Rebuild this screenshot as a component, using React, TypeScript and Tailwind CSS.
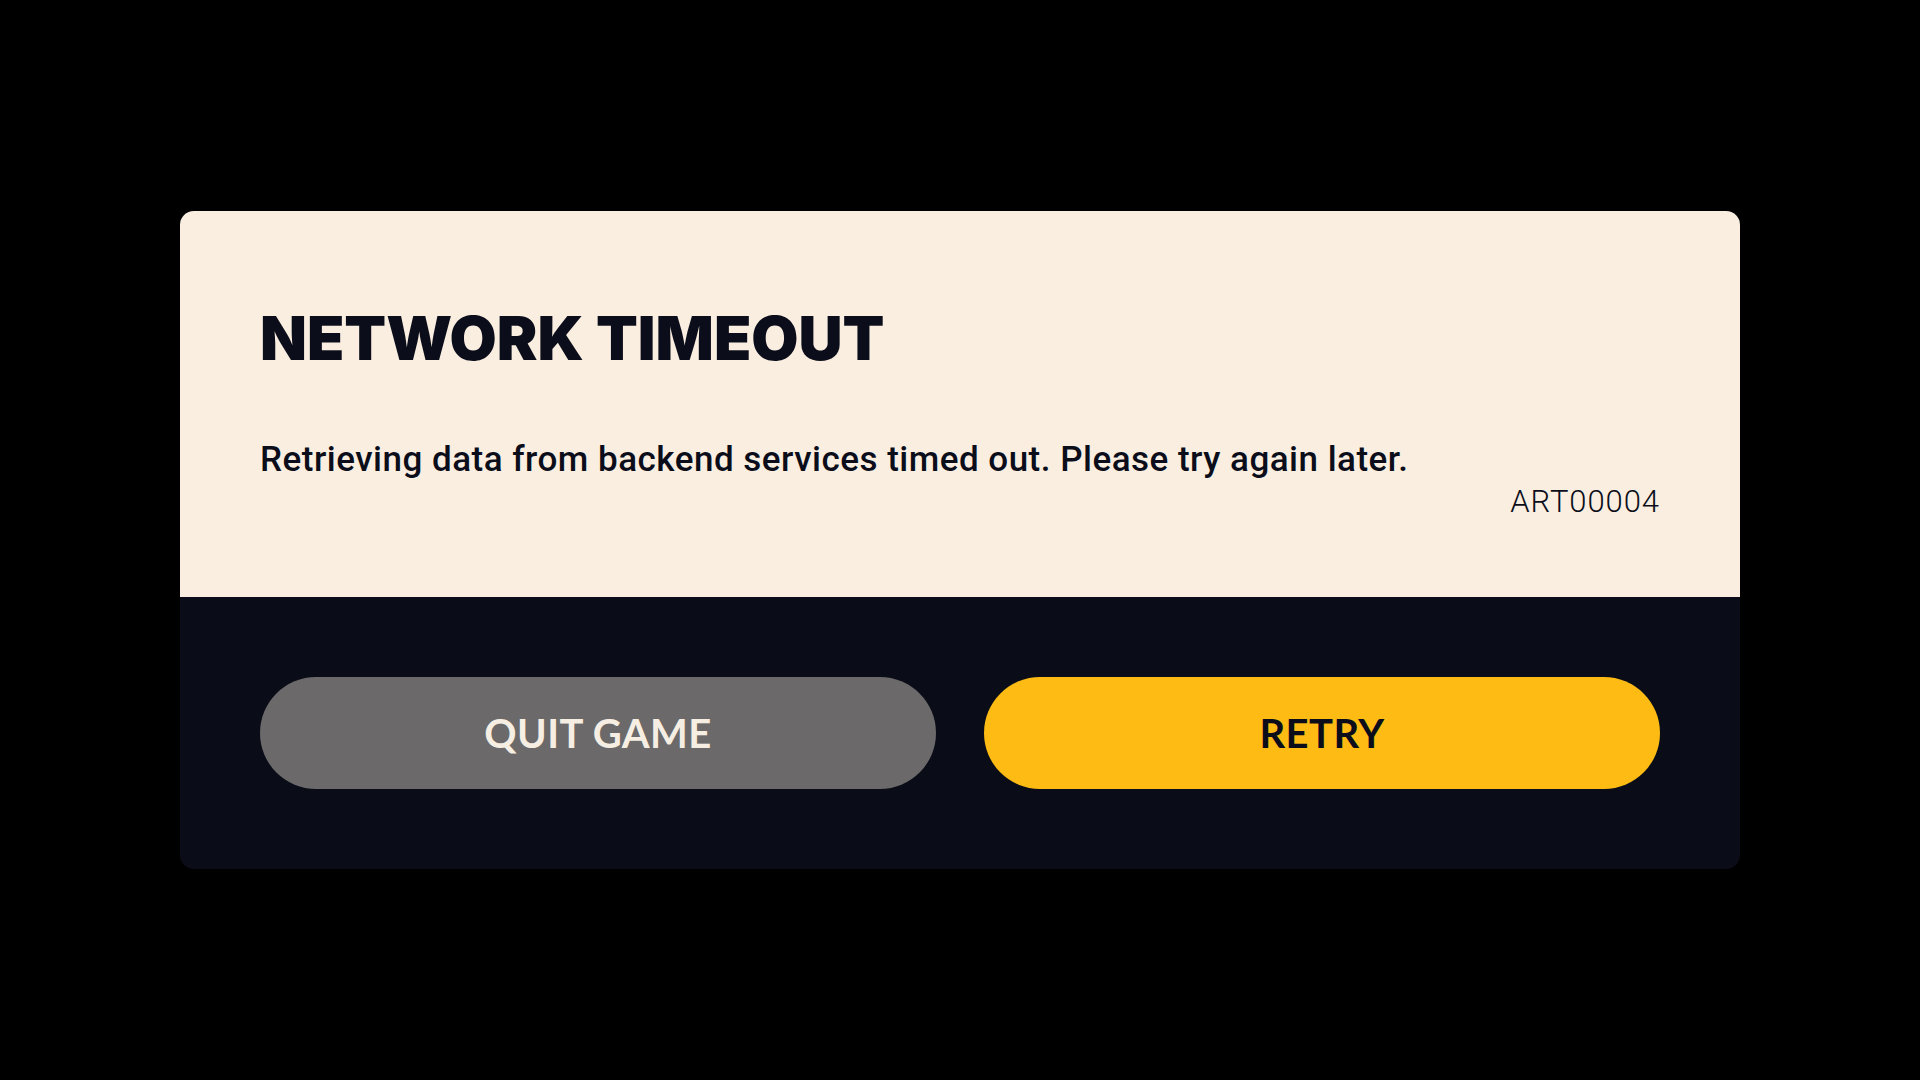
import React from 'react';

// Network timeout error dialog
export default function App() {
  return (
    <div className="w-[1920px] h-[1080px] bg-black flex items-center justify-center">
      <div className="w-[1560px] h-[658px] rounded-[14px] overflow-hidden flex flex-col">
        {/* Message area */}
        <div className="h-[388px] bg-[#FAEEE1] px-20 pt-[97px] text-[#0B0E1A]">
          <h1 className="font-['Inter',sans-serif] font-black text-[61px] leading-none tracking-normal uppercase">
            Network Timeout
          </h1>
          <p className="mt-[73px] font-['Roboto',sans-serif] font-medium text-[35px] leading-none tracking-[0.014em]">
            Retrieving data from backend services timed out. Please try again later.
          </p>
          <div className="mt-[9px] text-right font-['Roboto',sans-serif] font-light text-[31px] leading-none tracking-[0.03em]">
            ART00004
          </div>
        </div>

        {/* Actions */}
        <div className="flex-1 bg-[#0A0D18] px-20 py-20 flex gap-12">
          <button className="flex-1 h-[112px] rounded-full bg-[#6B6969] text-[#F6EEE3] font-['Lato',sans-serif] font-bold text-[40px] tracking-[0.01em]">
            QUIT GAME
          </button>
          <button className="flex-1 h-[112px] rounded-full bg-[#FDBB14] text-[#0B0E1A] font-['Lato',sans-serif] font-bold text-[40px] tracking-[0.01em]">
            RETRY
          </button>
        </div>
      </div>
    </div>
  );
}
